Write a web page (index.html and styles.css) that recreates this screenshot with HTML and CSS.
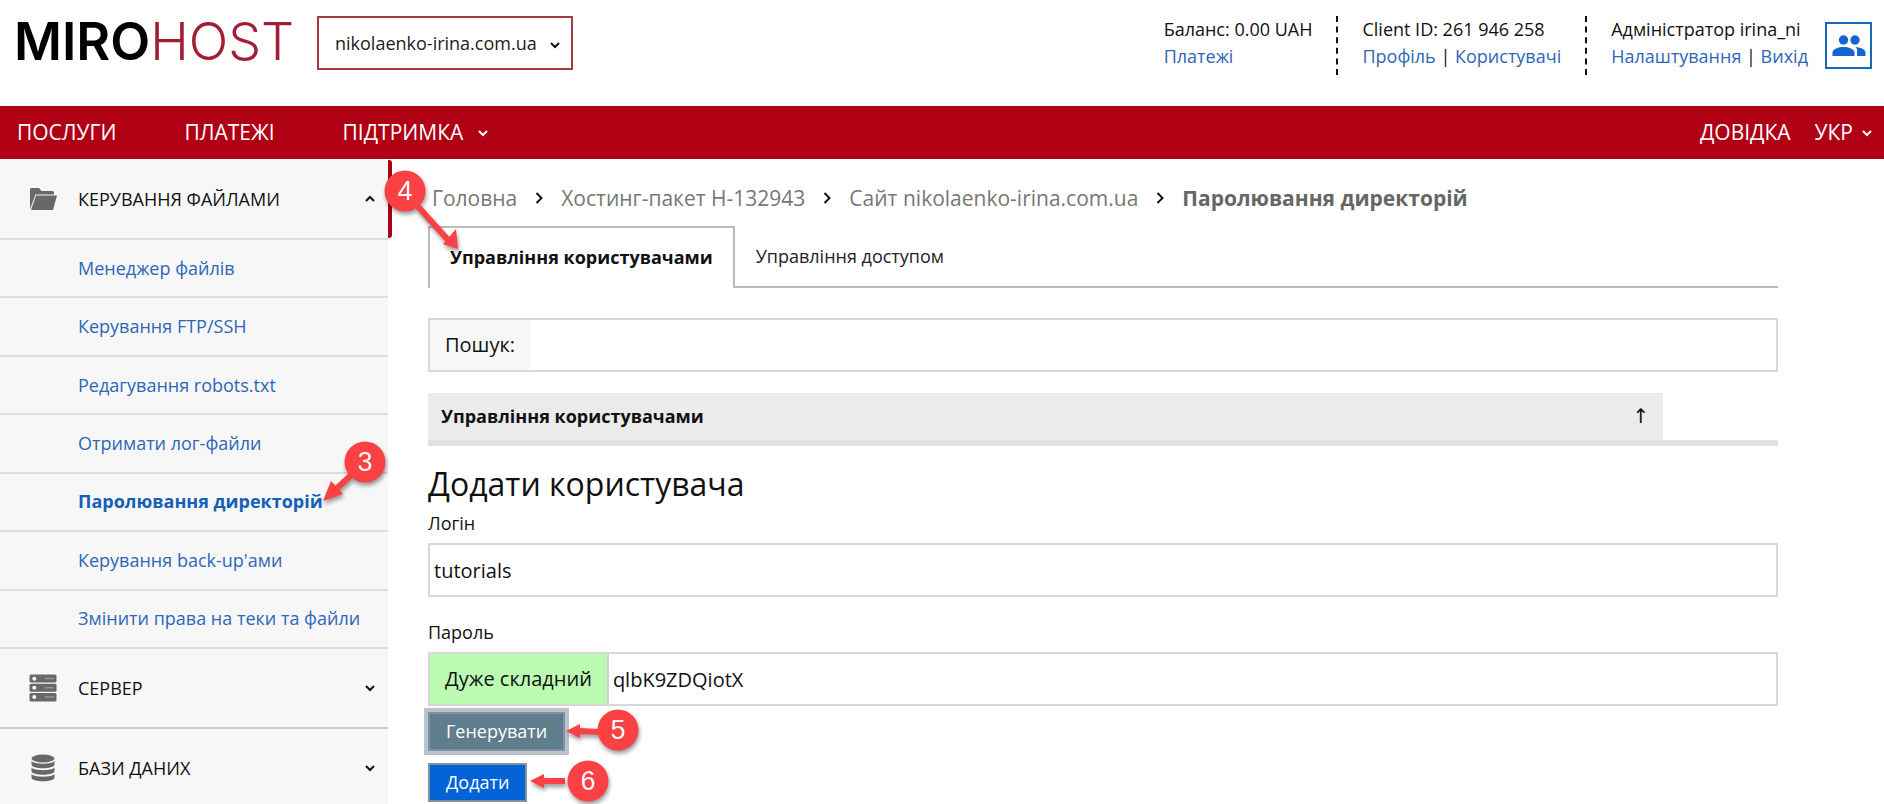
FILE: index.html
```html
<!DOCTYPE html>
<html lang="uk">
<head>
<meta charset="utf-8">
<title>Mirohost – Паролювання директорій</title>
<link rel="stylesheet" href="styles.css">
</head>
<body>
<svg class="sprite" aria-hidden="true">
  <symbol id="chevron" viewBox="0 0 10 8"><path d="M1 2l4 4 4-4" fill="none" stroke="currentColor" stroke-width="2"/></symbol>
  <symbol id="chevron-up" viewBox="0 0 10 8"><path d="M1 6l4-4 4 4" fill="none" stroke="currentColor" stroke-width="2"/></symbol>
  <symbol id="chevron-right" viewBox="0 0 8 12"><path d="M1.5 1l5 5-5 5" fill="none" stroke="currentColor" stroke-width="2"/></symbol>
</svg>

<header class="header">
  <a class="logo" href="#" aria-label="Mirohost">MIRO<span class="logo-host">HOST</span></a>
  <div class="domain">
    <select class="domain-select" aria-label="Домен">
      <option>nikolaenko-irina.com.ua</option>
    </select>
    <svg class="domain-arrow"><use href="#chevron"/></svg>
  </div>
  <div class="account">
    <div class="account-block">
      <div>Баланс: 0.00 UAH</div>
      <div><a href="#">Платежі</a></div>
    </div>
    <div class="account-block">
      <div>Client ID: 261 946 258</div>
      <div><a href="#">Профіль</a> | <a href="#">Користувачі</a></div>
    </div>
    <div class="account-block">
      <div>Адміністратор irina_ni</div>
      <div><a href="#">Налаштування</a> | <a href="#">Вихід</a></div>
    </div>
    <button class="users-button" type="button" aria-label="Користувачі">
      <svg class="users-icon" viewBox="0 0 34 22">
        <circle cx="11.500" cy="5" r="4.700"/>
        <circle cx="23" cy="5" r="4.700"/>
        <path d="M0.500 21v-3.500C0.500 14 6.500 12 11.500 12s11 2 11 5.500V21z"/>
        <path d="M25 21h8.500v-3.500c0-3.200-5.500-5.300-10.200-5.500 1.600 1.400 2.300 3 1.700 5z"/>
      </svg>
    </button>
  </div>
</header>

<nav class="nav">
  <a href="#">ПОСЛУГИ</a>
  <a href="#">ПЛАТЕЖІ</a>
  <a class="nav-support" href="#">ПІДТРИМКА <svg class="chev"><use href="#chevron"/></svg></a>
  <div class="nav-right">
    <a href="#">ДОВІДКА</a>
    <a class="nav-lang" href="#">УКР <svg class="chev"><use href="#chevron"/></svg></a>
  </div>
</nav>

<div class="layout">
  <aside class="sidebar">
    <button class="group group-open" type="button">
      <svg class="group-icon" viewBox="0 0 28 28">
        <path d="M1 4.500Q1 3 2.500 3H10l2.500 3H23q2 0 2 2v1.500H6.500L1 24z"/>
        <path d="M7 10.500h21l-4 14.500H2z"/>
      </svg>
      <span>КЕРУВАННЯ ФАЙЛАМИ</span>
      <svg class="chev"><use href="#chevron-up"/></svg>
    </button>
    <ul class="submenu">
      <li><a href="#">Менеджер файлів</a></li>
      <li><a href="#">Керування FTP/SSH</a></li>
      <li><a href="#">Редагування robots.txt</a></li>
      <li><a href="#">Отримати лог-файли</a></li>
      <li><a class="current" href="#">Паролювання директорій
        <svg class="callout callout-3" viewBox="0 0 72 72">
          <path d="M42 30L14 56" class="callout-line"/><path d="M3 66l8-20 12 13z"/>
          <circle cx="45" cy="27" r="20.500"/><text x="45" y="36">3</text>
        </svg></a></li>
      <li><a href="#">Керування back-up'ами</a></li>
      <li><a href="#">Змінити права на теки та файли</a></li>
    </ul>
    <button class="group" type="button">
      <svg class="group-icon" viewBox="0 0 28 28">
        <rect x="0.500" y="0.500" width="27" height="8" rx="1.500"/>
        <rect x="0.500" y="9.700" width="27" height="8" rx="1.500"/>
        <rect x="0.500" y="18.900" width="27" height="8.600" rx="1.500"/>
        <g fill="#f7f7f7"><circle cx="5.300" cy="4.700" r="2"/><circle cx="5.300" cy="13.800" r="2"/><circle cx="5.300" cy="23" r="2"/></g>
        <path d="M16 4.500h9M16 13.700h9M16 23h9" stroke="#aaa" stroke-width="1.500" stroke-dasharray="1.500 0.800"/>
      </svg>
      <span>СЕРВЕР</span>
      <svg class="chev"><use href="#chevron"/></svg>
    </button>
    <button class="group" type="button">
      <svg class="group-icon" viewBox="0 0 28 28">
        <ellipse cx="14" cy="4.500" rx="11.500" ry="4"/>
        <path d="M2.500 7c2 3.500 21 3.500 23 0v3.500c0 5-23 5-23 0z"/>
        <path d="M2.500 13.500c2 3.500 21 3.500 23 0V17c0 5-23 5-23 0z"/>
        <path d="M2.500 20c2 3.500 21 3.500 23 0v3.500c0 5-23 5-23 0z"/>
      </svg>
      <span>БАЗИ ДАНИХ</span>
      <svg class="chev"><use href="#chevron"/></svg>
    </button>
  </aside>

  <main class="main">
    <nav class="crumbs" aria-label="Навігація">
      <a href="#">Головна</a>
      <svg class="crumb-sep"><use href="#chevron-right"/></svg>
      <a href="#">Хостинг-пакет H-132943</a>
      <svg class="crumb-sep"><use href="#chevron-right"/></svg>
      <a href="#">Сайт nikolaenko-irina.com.ua</a>
      <svg class="crumb-sep"><use href="#chevron-right"/></svg>
      <b>Паролювання директорій</b>
    </nav>

    <div class="tabs">
      <a class="tab tab-active" href="#">Управління користувачами
        <svg class="callout callout-4" viewBox="0 0 80 90">
          <path d="M22 24L68 75" class="callout-line"/><path d="M77 83L62 78l13-15z"/>
          <circle cx="24" cy="25" r="20.500"/><text x="24" y="34">4</text>
        </svg></a>
      <a class="tab" href="#">Управління доступом</a>
    </div>

    <div class="field search">
      <label class="search-label" for="search">Пошук:</label>
      <input class="input" id="search" type="text">
    </div>

    <div class="table-wrap">
      <table class="users">
        <thead><tr><th scope="col">Управління користувачами</th><th scope="col" class="sort">↑</th></tr></thead>
      </table>
    </div>

    <form class="form">
      <h1 class="title">Додати користувача</h1>
      <label class="label" for="login">Логін</label>
      <div class="field"><input class="input" id="login" type="text" value="tutorials"></div>
      <label class="label label-next" for="password">Пароль</label>
      <div class="field">
        <span class="strength">Дуже складний</span>
        <input class="input" id="password" type="text" value="qlbK9ZDQiotX">
      </div>
      <div class="actions">
        <div class="action">
          <button class="button button-generate" type="button">Генерувати</button>
          <svg class="callout callout-flat" viewBox="0 0 80 50">
            <path d="M36 24L14 23" class="callout-line"/><path d="M1 23l14-7v14z"/>
            <circle cx="53" cy="22" r="20.500"/><text x="53" y="31">5</text>
          </svg>
        </div>
        <div class="action">
          <button class="button button-add" type="button">Додати</button>
          <svg class="callout callout-flat" viewBox="0 0 80 50">
            <path d="M38 22H16" class="callout-line"/><path d="M3 22l14-7v14z"/>
            <circle cx="61" cy="22" r="20.500"/><text x="61" y="31">6</text>
          </svg>
        </div>
      </div>
    </form>
  </main>
</div>
</body>
</html>
```

FILE: styles.css
```css
* { box-sizing: border-box; }

body {
  margin: 0;
  min-height: 100vh;
  display: flex;
  flex-direction: column;
  overflow: hidden;
  background: #fff;
  color: #111;
  font: 18px/27px "Open Sans", "Noto Sans", sans-serif;
}

a { color: #2e66b8; text-decoration: none; }
button, input, select { font: inherit; color: inherit; }
.sprite { position: absolute; width: 0; height: 0; }
.chev { width: 10px; height: 8px; flex: none; }

/* Header */
.header {
  display: flex;
  align-items: flex-start;
  height: 106px;
  padding: 16px 12px 0 14px;
}
.logo {
  width: 303px;
  color: #000;
  font: 600 52px/52px Inter, sans-serif;
}
.logo-host { color: #a31d34; font-weight: 300; }
.domain { position: relative; }
.domain-select {
  appearance: none;
  height: 54px;
  padding: 0 34px 0 16px;
  border: 2px solid #a83a42;
  border-radius: 0;
  background: #fff;
  color: #222;
}
.domain-arrow {
  position: absolute;
  right: 13px;
  top: 25px;
  width: 10px;
  height: 8px;
  pointer-events: none;
}
.account { display: flex; margin-left: auto; }
.account-block { height: 59px; padding: 0 24px; }
.account-block + .account-block { border-left: 2px dashed #111; }
.account-block:nth-child(3) { padding-right: 17px; }
.users-button {
  display: grid;
  place-items: center;
  width: 47px;
  height: 47px;
  margin-top: 6px;
  padding: 0;
  border: 2px solid #1769b8;
  background: #fff;
}
.users-icon { width: 34px; height: 22px; fill: #1465d2; }

/* Navigation bar */
.nav {
  display: flex;
  align-items: center;
  gap: 68px;
  height: 53px;
  padding: 0 12px 0 17px;
  background: #b00014;
  font-size: 21px;
}
.nav a { color: #fff; }
.nav-support, .nav-lang { display: flex; align-items: center; gap: 15px; }
.nav-lang { gap: 9px; }
.nav-right { display: flex; gap: 24px; margin-left: auto; }

/* Sidebar */
.layout { display: flex; flex: 1; }
.sidebar { width: 388px; flex: none; padding-top: 1px; background: #f7f7f7; }
.group {
  position: relative;
  display: flex;
  align-items: center;
  gap: 21px;
  width: 100%;
  height: 80px;
  padding: 0 13px 0 29px;
  border: 0;
  border-bottom: 2px solid #ccc;
  background: none;
  text-align: left;
}
.group .chev { margin-left: auto; }
.group-icon { width: 28px; height: 28px; fill: #686868; }
.group-open { border-color: #ddd; }
.group-open::after {
  content: "";
  position: absolute;
  left: 100%;
  top: 0;
  width: 4px;
  height: 78px;
  border-radius: 0 3px 3px 0;
  background: #a80018;
}
.submenu {
  display: grid;
  grid-auto-rows: 1fr;
  min-height: 409px;
  margin: 0;
  padding: 0;
  list-style: none;
}
.submenu li {
  display: flex;
  align-items: center;
  padding-left: 78px;
  border-bottom: 2px solid #ddd;
}
.current { position: relative; color: #1460b8; font-weight: 700; }

/* Main column */
.main { flex: 1; padding: 24px 106px 0 40px; }
.crumbs { display: flex; align-items: center; font-size: 21px; line-height: 30px; padding-left: 4px; color: #666; }
.crumbs a { color: #777; }
.crumb-sep { width: 8px; height: 12px; margin: 0 18px; color: #111; }

.tabs {
  display: flex;
  margin-top: 13px;
  background: linear-gradient(#bbb, #bbb) bottom / 100% 2px no-repeat;
}
.tab { padding: 17px 21px; color: #222; }
.tab-active {
  position: relative;
  padding: 16px 20px 17px;
  border: 2px solid #bbb;
  border-bottom: 0;
  background: #fff;
  color: #111;
  font-weight: 700;
}

.field { display: flex; border: 2px solid #d8d8d8; }
.input {
  flex: 1;
  min-width: 0;
  height: 50px;
  padding: 0 4px;
  border: 0;
  outline: 0;
  background: #fff;
  font-size: 20px;
}
.search { margin-top: 30px; }
.search-label { padding: 0 15px; background: #f7f7f7; font-size: 20px; line-height: 50px; }

.table-wrap { margin-top: 21px; border-bottom: 6px solid #e1e1e1; }
.users { width: 91.5%; border-collapse: collapse; background: #ebebeb; }
.users th { height: 47px; padding: 0 13px; text-align: left; }
.users .sort { padding-right: 14px; text-align: right; font: 400 20px/27px "DejaVu Sans", sans-serif; }

.title { margin: 14px 0 0; font-size: 32px; font-weight: 400; line-height: 48px; }
.label { display: block; margin-bottom: 5px; line-height: 30px; }
.label-next { margin-top: 20px; }
.strength {
  padding: 0 15px;
  border-right: 2px solid #d0d0d0;
  background: #bbfcb2;
  font-size: 20px;
  line-height: 50px;
}
.actions { display: grid; justify-items: start; gap: 12px; margin-top: 6px; }
.action { position: relative; }
.button {
  display: block;
  height: 39px;
  padding: 0 16px;
  border: 2px solid #80929f;
  color: #fff;
}
.button-generate { background: #5f7d8c; box-shadow: 0 0 0 4px #b8c3cb; }
.button-add { background: #0563d8; }

/* Numbered callouts over the page */
.callout {
  position: absolute;
  z-index: 2;
  overflow: visible;
  fill: #fb4144;
  filter: drop-shadow(1px 3px 2px #0006);
  pointer-events: none;
}
.callout-line { stroke: #fb4144; stroke-width: 6; }
.callout text { fill: #fff; font: 400 27px "Liberation Sans", sans-serif; text-anchor: middle; }
.callout-3 { left: 242px; top: -53px; width: 72px; height: 72px; }
.callout-4 { left: -49px; top: -62px; width: 80px; height: 90px; }
.callout-flat { left: 100%; top: -4px; width: 80px; height: 50px; }
```
